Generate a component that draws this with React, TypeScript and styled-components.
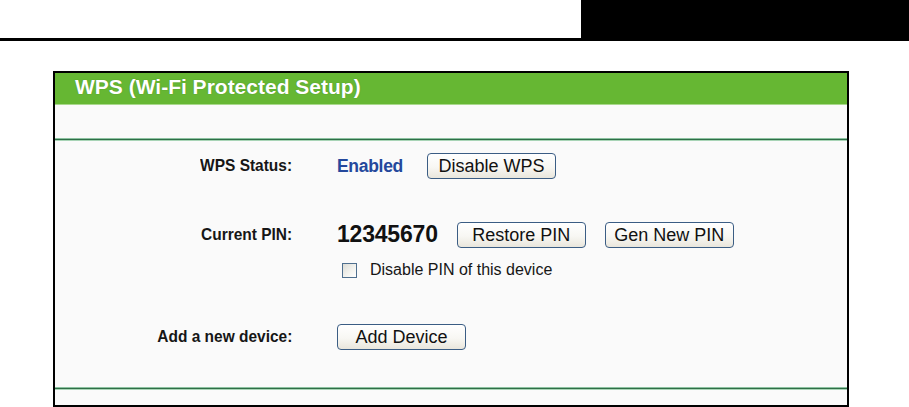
import React from "react";
import styled, { createGlobalStyle } from "styled-components";

const Global = createGlobalStyle`
  html, body { margin: 0; padding: 0; background: #ffffff; }
  body { font-family: "Liberation Sans", Arial, sans-serif; width: 909px; height: 407px; overflow: hidden; }
`;

const TopBar = styled.div`
  display: flex;
  height: 38px;
  border-bottom: 3px solid #000;
`;

const TopSpacer = styled.div`
  flex: 1;
`;

const TopTab = styled.div`
  width: 328px;
  background: #000;
`;

const Panel = styled.section`
  margin: 30px 0 0 53px;
  width: 792px;
  border: 2px solid #000;
  background: #fafafa;
`;

const Header = styled.div`
  height: 31px;
  background: #66b733;
  border-bottom: 1px solid #a9d88c;
  color: #fff;
  font-weight: bold;
  font-size: 21px;
  line-height: 28px;
  padding-left: 20px;
  text-shadow: 0 0 1px rgba(40, 90, 20, 0.5);
`;

const Blank = styled.div<{ $h: number }>`
  height: ${(p) => p.$h}px;
`;

const Separator = styled.div`
  height: 1px;
  background: #2f6e47;
  border-top: 1px solid #8cc2a0;
  border-bottom: 1px solid #a8d4b6;
`;

const Content = styled.div`
  display: flex;
  flex-direction: column;
  padding: 12px 0 37px 0;
`;

const Row = styled.div<{ $top?: number; $h: number }>`
  display: grid;
  grid-template-columns: 237px 1fr;
  column-gap: 45px;
  align-items: center;
  height: ${(p) => p.$h}px;
  margin-top: ${(p) => p.$top ?? 0}px;
`;

const Label = styled.div`
  justify-self: end;
  font-weight: bold;
  font-size: 17px;
  color: #161616;
  white-space: nowrap;
  transform: scaleX(0.91);
  transform-origin: right center;
`;

const Field = styled.div`
  display: flex;
  align-items: center;
  white-space: nowrap;
`;

const Status = styled.span`
  font-weight: bold;
  font-size: 17.5px;
  color: #24489c;
  margin-right: 24px;
  letter-spacing: -0.3px;
`;

const Pin = styled.span`
  font-weight: bold;
  font-size: 23px;
  color: #111;
  margin-right: 19px;
  letter-spacing: -0.2px;
`;

const Button = styled.button<{ $gap?: number }>`
  width: 129px;
  height: 26px;
  margin: 0 ${(p) => p.$gap ?? 0}px 0 0;
  padding: 0;
  font-family: "Liberation Sans", Arial, sans-serif;
  font-size: 18px;
  color: #111;
  border: 1px solid #3b5d84;
  border-radius: 4px;
  background: linear-gradient(#ffffff 0%, #f8f7f3 55%, #e9e6dc 100%);
  line-height: 22px;
`;

const CheckLine = styled.label`
  display: flex;
  align-items: center;
  font-size: 16px;
  color: #161616;
`;

const Box = styled.span`
  width: 13px;
  height: 13px;
  margin: 0 13px 0 5px;
  border: 1px solid #4f6f8e;
  background: linear-gradient(135deg, #dcdcd6 0%, #f4f4f0 60%, #ffffff 100%);
`;

export default function App() {
  return (
    <>
      <Global />
      <TopBar>
        <TopSpacer />
        <TopTab />
      </TopBar>
      <Panel>
        <Header>WPS (Wi-Fi Protected Setup)</Header>
        <Blank $h={33} />
        <Separator />
        <Content>
          <Row $h={25}>
            <Label>WPS Status:</Label>
            <Field>
              <Status>Enabled</Status>
              <Button>Disable WPS</Button>
            </Field>
          </Row>
          <Row $top={43} $h={26}>
            <Label>Current PIN:</Label>
            <Field>
              <Pin>12345670</Pin>
              <Button $gap={19}>Restore PIN</Button>
              <Button>Gen New PIN</Button>
            </Field>
          </Row>
          <Row $top={14} $h={15}>
            <span />
            <CheckLine>
              <Box />
              Disable PIN of this device
            </CheckLine>
          </Row>
          <Row $top={48} $h={26}>
            <Label>Add a new device:</Label>
            <Field>
              <Button>Add Device</Button>
            </Field>
          </Row>
        </Content>
        <Separator />
        <Blank $h={15} />
      </Panel>
    </>
  );
}
